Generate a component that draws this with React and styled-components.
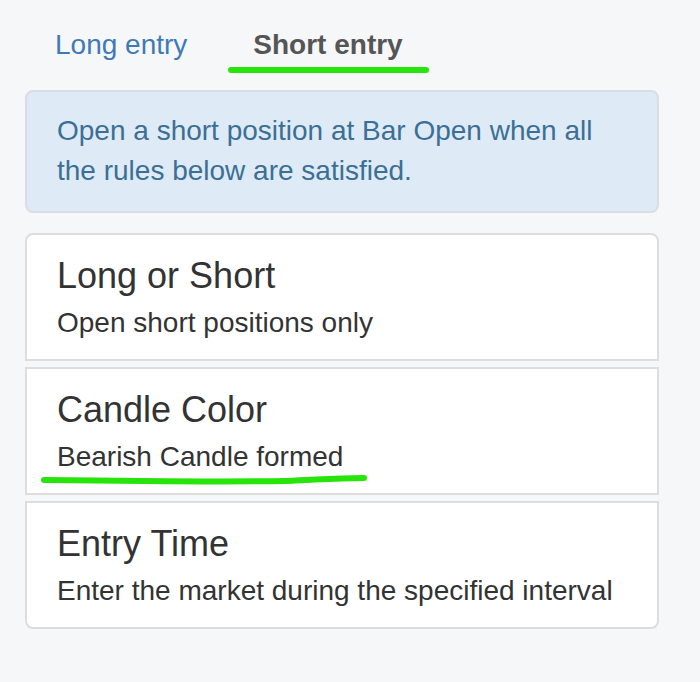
import React from 'react';
import styled, { createGlobalStyle, css } from 'styled-components';

const GlobalStyle = createGlobalStyle`
  html, body {
    margin: 0;
    padding: 0;
    background: #f6f7f9;
  }
  body {
    font-family: "Liberation Sans", Arial, Helvetica, sans-serif;
    color: #333;
    -webkit-font-smoothing: antialiased;
  }
  * {
    box-sizing: border-box;
  }
`;

const Page = styled.div`
  width: 700px;
  min-height: 682px;
  padding: 5px 41px 0 25px;
`;

const Tabs = styled.nav`
  display: flex;
  gap: 6px;
  margin: 0 0 5px;
`;

const Tab = styled.a`
  position: relative;
  display: block;
  padding: 20px 30px;
  font-size: 28px;
  line-height: 40px;
  color: #3f7ab6;
  text-decoration: none;
  cursor: pointer;
  ${props => props.active && css`
    color: #555;
    font-weight: bold;
  `}
`;

// green marker strokes drawn over the page
const Marker = styled.svg`
  position: absolute;
  overflow: visible;
  pointer-events: none;
  left: ${props => props.left}px;
  top: ${props => props.top}px;
`;

const Info = styled.div`
  padding: 19px 30px 20px;
  background: #deebf6;
  border: 2px solid #d9dee3;
  border-radius: 8px;
  color: #3c6f95;
  font-size: 28px;
  line-height: 40px;
  margin-bottom: 20px;
`;

const RuleList = styled.ul`
  list-style: none;
  margin: 0;
  padding: 0;
  display: flex;
  flex-direction: column;
  gap: 6px;
`;

const Rule = styled.li`
  background: #fff;
  border: 2px solid #dddddd;
  padding: 21px 30px 16px;

  &:first-child {
    border-radius: 8px 8px 0 0;
  }
  &:last-child {
    border-radius: 0 0 8px 8px;
  }
`;

const RuleTitle = styled.h4`
  margin: 0 0 7px;
  font-size: 36px;
  line-height: 40px;
  font-weight: normal;
  color: #333;
`;

const RuleText = styled.p`
  position: relative;
  margin: 0;
  font-size: 28px;
  line-height: 40px;
  color: #333;
`;

const rules = [
  { title: 'Long or Short', text: 'Open short positions only' },
  { title: 'Candle Color', text: 'Bearish Candle formed', marked: true },
  { title: 'Entry Time', text: 'Enter the market during the specified interval' },
];

const GREEN = '#27e40b';

export default function App() {
  return (
    <Page>
      <GlobalStyle />
      <Tabs>
        <Tab>Long entry</Tab>
        <Tab active>
          Short entry
          <Marker left={0} top={60} width="210" height="10">
            <path d="M8 5 L203 5" stroke={GREEN} strokeWidth="6" strokeLinecap="round" fill="none" />
          </Marker>
        </Tab>
      </Tabs>
      <Info>Open a short position at Bar Open when all the rules below are satisfied.</Info>
      <RuleList>
        {rules.map(rule => (
          <Rule key={rule.title}>
            <RuleTitle>{rule.title}</RuleTitle>
            <RuleText>
              {rule.text}
              {rule.marked && (
                <Marker left={-16} top={37} width="330" height="12">
                  <path
                    d="M3 6 C 80 7, 180 8, 245 7 C 275 6, 290 4, 323 4"
                    stroke={GREEN}
                    strokeWidth="6"
                    strokeLinecap="round"
                    fill="none"
                  />
                </Marker>
              )}
            </RuleText>
          </Rule>
        ))}
      </RuleList>
    </Page>
  );
}
